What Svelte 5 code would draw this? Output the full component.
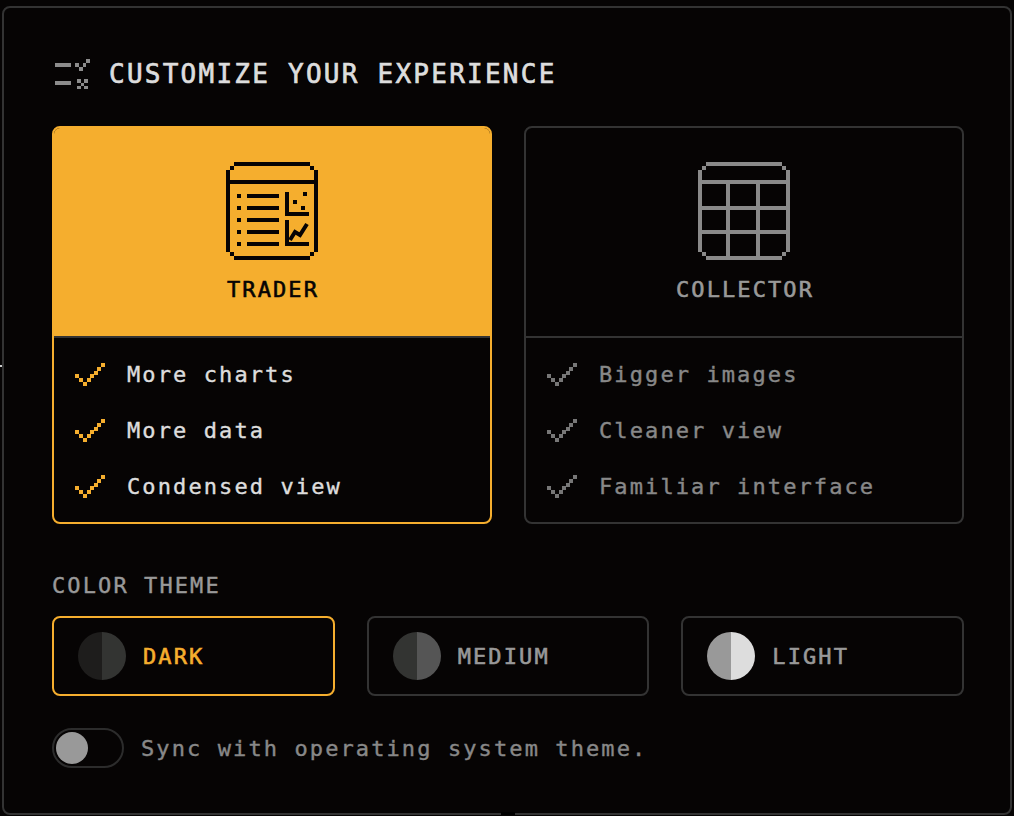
<script>
	const frame = [
		[8, 0, 76, 4], [4, 4, 4, 4], [84, 4, 4, 4], [0, 8, 4, 82], [88, 8, 4, 82],
		[0, 18, 92, 4], [4, 90, 4, 4], [84, 90, 4, 4], [8, 94, 76, 4]
	];
	const listRows = [32, 44, 56, 68, 80];
	const checkDots = [[0, 11], [4, 15], [8, 19], [12, 15], [15, 11], [19, 8], [22, 4], [26, 0]];

	const modes = [
		{ name: 'TRADER', active: true, points: ['More charts', 'More data', 'Condensed view'] },
		{ name: 'COLLECTOR', active: false, points: ['Bigger images', 'Cleaner view', 'Familiar interface'] }
	];
	const themes = [
		{ name: 'DARK', left: '#1e1d1c', right: '#333432', active: true },
		{ name: 'MEDIUM', left: '#333432', right: '#555555', active: false },
		{ name: 'LIGHT', left: '#999999', right: '#dddddd', active: false }
	];
</script>

<div class="modal">
	<header class="title-row">
		<svg class="title-icon" width="36" height="32" viewBox="0 0 36 32" fill="#8c8c8c">
			<rect x="0" y="4" width="16" height="4" />
			<rect x="0" y="22" width="16" height="4" />
			<rect x="20" y="4" width="4" height="4" />
			<rect x="24" y="8" width="4" height="4" />
			<rect x="28" y="4" width="3" height="4" />
			<rect x="31" y="0" width="4" height="4" />
			<rect x="22" y="20" width="4" height="4" />
			<rect x="29" y="20" width="4" height="4" />
			<rect x="26" y="24" width="3" height="3" />
			<rect x="22" y="27" width="4" height="3" />
			<rect x="29" y="27" width="4" height="3" />
		</svg>
		<h1>CUSTOMIZE YOUR EXPERIENCE</h1>
	</header>

	<div class="modes">
		{#each modes as mode}
			<section class="mode" class:active={mode.active}>
				<div class="mode-head">
					<svg width="92" height="98" viewBox="0 0 92 98" fill="currentColor">
						{#each frame as [x, y, w, h]}
							<rect {x} {y} width={w} height={h} />
						{/each}
						{#if mode.active}
							{#each listRows as y}
								<rect x="11" {y} width="4" height="4" />
								<rect x="21" {y} width="32" height="4" />
							{/each}
							<rect x="59" y="30" width="4" height="24" />
							<rect x="59" y="50" width="24" height="4" />
							<rect x="77" y="30" width="4" height="4" />
							<rect x="67" y="38" width="4" height="4" />
							<rect x="75" y="44" width="4" height="4" />
							<rect x="59" y="58" width="4" height="26" />
							<rect x="59" y="80" width="24" height="4" />
							<polyline points="64,78 69,70 74,73 81,62" fill="none" stroke="currentColor" stroke-width="4" />
						{:else}
							<rect x="28" y="18" width="4" height="78" />
							<rect x="58" y="18" width="4" height="78" />
							<rect x="0" y="44" width="92" height="4" />
							<rect x="0" y="68" width="92" height="4" />
						{/if}
					</svg>
					<span class="mode-name">{mode.name}</span>
				</div>
				<ul>
					{#each mode.points as point}
						<li>
							<svg class="check" width="30" height="23" viewBox="0 0 30 23" fill="currentColor">
								{#each checkDots as [x, y]}
									<rect {x} {y} width="4" height="4" />
								{/each}
							</svg>
							{point}
						</li>
					{/each}
				</ul>
			</section>
		{/each}
	</div>

	<h2>COLOR THEME</h2>
	<div class="themes">
		{#each themes as theme}
			<button class="theme" class:active={theme.active}>
				<span class="swatch" style="background: linear-gradient(90deg, {theme.left} 50%, {theme.right} 50%)"></span>
				{theme.name}
			</button>
		{/each}
	</div>

	<div class="sync">
		<span class="toggle"><span class="knob"></span></span>
		Sync with operating system theme.
	</div>

	<i class="notch"></i>
</div>
<i class="tick"></i>

<style>
	:global(body) {
		background: #060404;
	}
	.modal {
		position: relative;
		box-sizing: border-box;
		width: 1010px;
		height: 809px;
		margin: 6px 2px 0;
		padding: 41px 46px 0 48px;
		border: 2px solid #333333;
		border-radius: 8px;
		background: #060404;
		color: #888888;
		font-family: 'DejaVu Sans Mono', monospace;
		font-size: 22px;
		letter-spacing: 2.1px;
		-webkit-text-stroke: 0.4px currentColor;
	}
	.title-row {
		display: flex;
		align-items: center;
		gap: 18px;
		height: 50px;
		margin-bottom: 27px;
	}
	.title-icon {
		margin: 2px 0 0 3px;
		flex: none;
	}
	h1 {
		margin: 0;
		color: #dddddd;
		font-size: 26px;
		font-weight: 400;
		letter-spacing: 2.25px;
		-webkit-text-stroke: 0.7px currentColor;
	}
	.modes {
		display: grid;
		grid-template-columns: 1fr 1fr;
		gap: 32px;
	}
	.mode {
		border: 2px solid #333333;
		border-radius: 8px;
		overflow: hidden;
	}
	.mode.active {
		border-color: #f5ae2e;
	}
	.mode-head {
		box-sizing: border-box;
		height: 210px;
		display: flex;
		flex-direction: column;
		align-items: center;
		padding-top: 34px;
		border-bottom: 2px solid #333333;
		color: #8a8a8a;
	}
	.active .mode-head {
		background: #f5ae2e;
		color: #060404;
	}
	.mode-name {
		margin-top: 16px;
		padding-left: 2px;
		line-height: 28px;
		color: #999999;
		-webkit-text-stroke: 0.6px currentColor;
	}
	.active .mode-name {
		color: #060404;
	}
	ul {
		list-style: none;
		margin: 0;
		padding: 8px 0 8px 21px;
	}
	li {
		display: flex;
		align-items: center;
		gap: 22px;
		height: 56px;
	}
	.active li {
		color: #dddddd;
	}
	.check {
		flex: none;
		color: #777777;
	}
	.active .check {
		color: #f5ae2e;
	}
	h2 {
		margin: 46px 0 14px;
		font: inherit;
		line-height: 32px;
		color: #999999;
	}
	.themes {
		display: grid;
		grid-template-columns: repeat(3, 1fr);
		gap: 32px;
	}
	.theme {
		display: flex;
		align-items: center;
		gap: 17px;
		height: 80px;
		padding: 0 24px;
		border: 2px solid #333333;
		border-radius: 8px;
		background: none;
		color: #999999;
		font: inherit;
		letter-spacing: inherit;
		-webkit-text-stroke: 0.6px currentColor;
	}
	.theme.active {
		border-color: #f5ae2e;
		color: #f5ae2e;
	}
	.swatch {
		width: 48px;
		height: 48px;
		border-radius: 50%;
		flex: none;
	}
	.sync {
		display: flex;
		align-items: center;
		gap: 17px;
		margin-top: 32px;
		height: 40px;
	}
	.toggle {
		box-sizing: border-box;
		display: flex;
		align-items: center;
		width: 72px;
		height: 40px;
		padding-left: 2px;
		border: 2px solid #2c2c2c;
		border-radius: 20px;
		flex: none;
	}
	.knob {
		width: 32px;
		height: 32px;
		border-radius: 50%;
		background: #999999;
	}
	.notch {
		position: absolute;
		left: 497px;
		bottom: -2px;
		width: 14px;
		height: 3px;
		background: #000000;
	}
	.tick {
		position: absolute;
		left: 0;
		top: 365px;
		width: 2px;
		height: 2px;
		background: #cccccc;
	}
</style>
